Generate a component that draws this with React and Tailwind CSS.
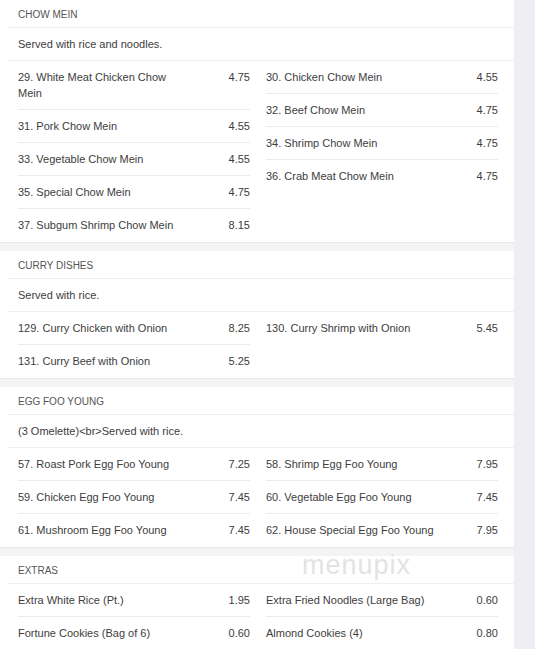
import React from 'react'

const sections = [
  {
    title: 'Chow Mein',
    desc: 'Served with rice and noodles.',
    left: [
      ['29. White Meat Chicken Chow Mein', '4.75'],
      ['31. Pork Chow Mein', '4.55'],
      ['33. Vegetable Chow Mein', '4.55'],
      ['35. Special Chow Mein', '4.75'],
      ['37. Subgum Shrimp Chow Mein', '8.15'],
    ],
    right: [
      ['30. Chicken Chow Mein', '4.55'],
      ['32. Beef Chow Mein', '4.75'],
      ['34. Shrimp Chow Mein', '4.75'],
      ['36. Crab Meat Chow Mein', '4.75'],
    ],
  },
  {
    title: 'Curry Dishes',
    desc: 'Served with rice.',
    left: [
      ['129. Curry Chicken with Onion', '8.25'],
      ['131. Curry Beef with Onion', '5.25'],
    ],
    right: [['130. Curry Shrimp with Onion', '5.45']],
  },
  {
    title: 'Egg Foo Young',
    desc: '(3 Omelette)<br>Served with rice.',
    left: [
      ['57. Roast Pork Egg Foo Young', '7.25'],
      ['59. Chicken Egg Foo Young', '7.45'],
      ['61. Mushroom Egg Foo Young', '7.45'],
    ],
    right: [
      ['58. Shrimp Egg Foo Young', '7.95'],
      ['60. Vegetable Egg Foo Young', '7.45'],
      ['62. House Special Egg Foo Young', '7.95'],
    ],
  },
  {
    title: 'Extras',
    left: [
      ['Extra White Rice (Pt.)', '1.95'],
      ['Fortune Cookies (Bag of 6)', '0.60'],
    ],
    right: [
      ['Extra Fried Noodles (Large Bag)', '0.60'],
      ['Almond Cookies (4)', '0.80'],
    ],
    watermark: true,
  },
]

const Column = ({ items }) => (
  <div className="flex flex-col">
    {items.map(([name, price], i) => (
      <div
        key={name}
        className={
          'flex flex-row justify-between py-[8px] border-b ' +
          (i < items.length - 1 ? 'border-[#ececec]' : 'border-transparent')
        }
      >
        <span className="w-[171px] leading-[16px]">{name}</span>
        <span className="leading-[16px]">{price}</span>
      </div>
    ))}
  </div>
)

const Section = ({ section, first }) => (
  <div className="relative">
    {!first && <div className="h-[9px] bg-[#f4f4f5] border-t border-[#e9e9eb]" />}
    <div className="ml-2 h-[28px] pt-[2px] pl-[10px] flex items-center border-b border-[#efefef] text-[10px] uppercase text-[#555]">
      {section.title}
    </div>
    {section.desc && (
      <div className="ml-2 h-[33px] pl-[10px] flex items-center border-b border-[#efefef]">
        {section.desc}
      </div>
    )}
    <div className="grid grid-cols-2 gap-x-4 pl-[18px] pr-4">
      <Column items={section.left} />
      <Column items={section.right} />
    </div>
    {section.watermark && (
      <div className="absolute left-[302px] top-[1px] text-[27px] leading-[34px] tracking-[1px] font-light text-[#e3e3e3] select-none">
        menupix
      </div>
    )}
  </div>
)

const App = () => {
  return (
    <div
      className="w-[535px] h-[649px] overflow-hidden bg-[#eeeef3] text-[11px] text-[#3d3d3d]"
      style={{ fontFamily: '"Liberation Sans", Arial, sans-serif' }}
    >
      <div className="w-[514px] bg-white">
        {sections.map((s, i) => (
          <Section key={s.title} section={s} first={i === 0} />
        ))}
      </div>
    </div>
  )
}

export default App
